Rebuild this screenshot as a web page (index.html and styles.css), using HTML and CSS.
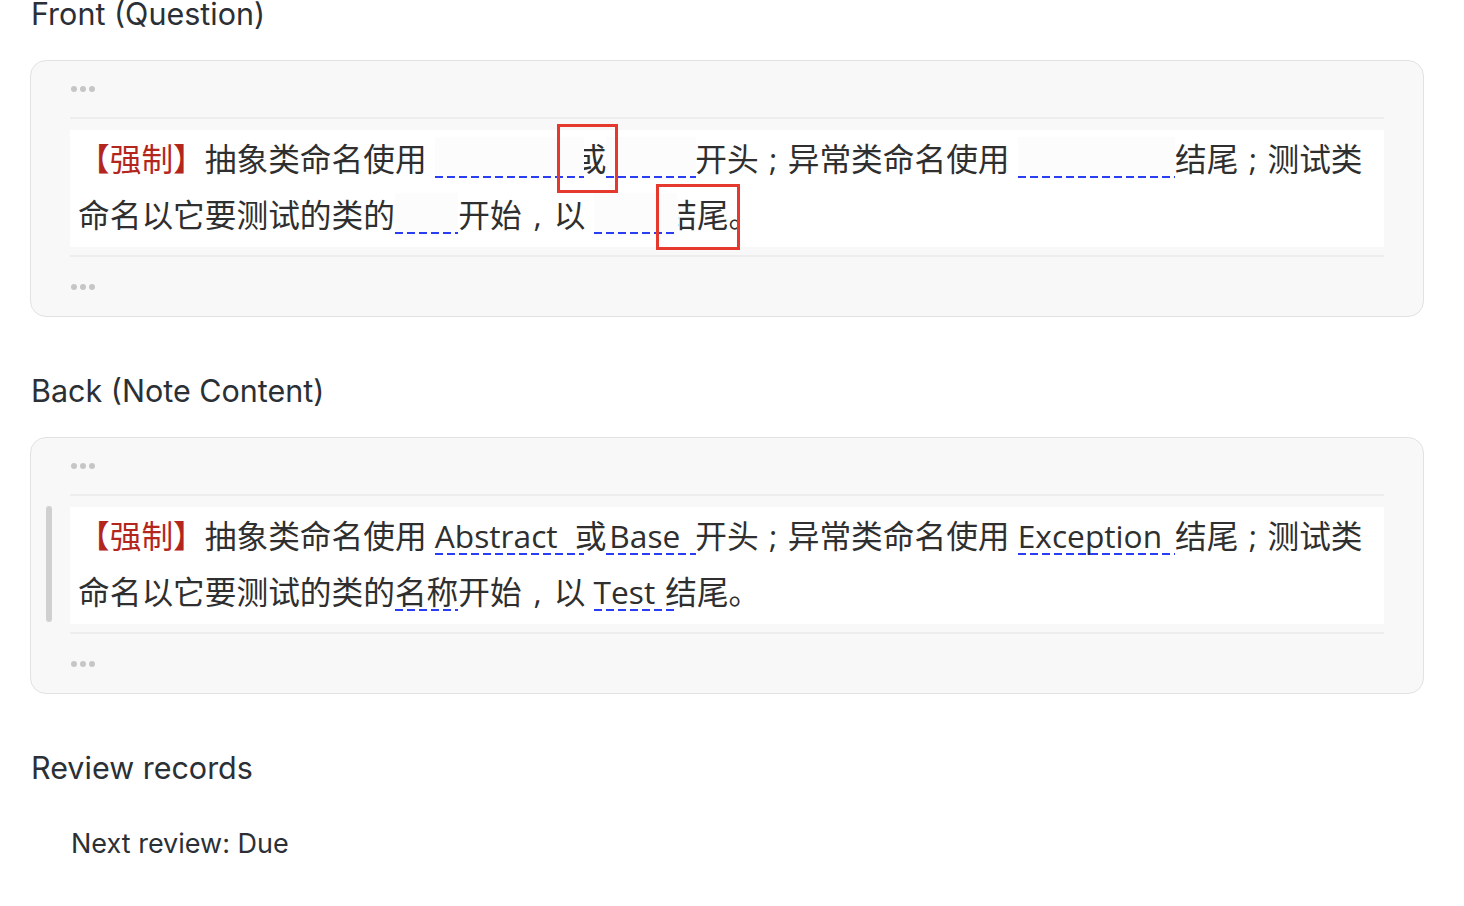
FILE: index.html
```html
<!DOCTYPE html>
<html>
<head>
	<meta charset="utf-8">
	<title>Card detail</title>
	<link rel="stylesheet" href="styles.css">
</head>
<body>
	<main class="page">
		<section class="field">
			<h2 class="field-title">Front (Question)</h2>
			<div class="card">
				<div class="dots"><span></span><span></span><span></span></div>
				<div class="rule"></div>
				<div class="note-row">
					<div class="note front">
						<span class="tag">【强制】</span>抽象类命名使用 <span class="u u-abstract blank">Abstract</span><span class="cut">或</span><span class="u u-base blank">Base</span>开头<span class="p">;</span>异常类命名使用 <span class="u u-exception blank">Exception</span>结尾<span class="p">;</span>测试类<br>命名以它要测试的类的<span class="u blank">名称</span>开始<span class="p p-wide">,</span>以 <span class="u u-test blank">Test</span><span class="cut cut-wide">结</span>尾。
						<span class="mark mark-a"></span>
						<span class="mark mark-b"></span>
					</div>
				</div>
				<div class="rule rule-bottom"></div>
				<div class="dots dots-bottom"><span></span><span></span><span></span></div>
			</div>
		</section>

		<section class="field">
			<h2 class="field-title">Back (Note Content)</h2>
			<div class="card">
				<div class="dots"><span></span><span></span><span></span></div>
				<div class="rule"></div>
				<div class="note-row quoted">
					<div class="bar"></div>
					<div class="note">
						<span class="tag">【强制】</span>抽象类命名使用 <span class="u u-abstract">Abstract</span>或<span class="u u-base">Base</span>开头<span class="p">;</span>异常类命名使用 <span class="u u-exception">Exception</span>结尾<span class="p">;</span>测试类<br>命名以它要测试的类的<span class="u">名称</span>开始<span class="p p-wide">,</span>以 <span class="u u-test">Test</span>结尾。
					</div>
				</div>
				<div class="rule rule-bottom"></div>
				<div class="dots dots-bottom"><span></span><span></span><span></span></div>
			</div>
		</section>

		<section class="field">
			<h2 class="field-title">Review records</h2>
			<p class="next-review">Next review: Due</p>
		</section>
	</main>
</body>
</html>
```

FILE: styles.css
```css
body {
	margin: 0;
	background: #ffffff;
	font-family: Inter, "Noto Sans", sans-serif;
	color: #2b3036;
}

.page {
	padding: 0 40px 0 30px;
	margin-top: -4px;
}

.field {
	margin-bottom: 56px;
}

.field-title {
	margin: 0 0 28px 0;
	font-size: 30.5px;
	line-height: 36px;
	font-weight: 400;
	padding-left: 1px;
}

/* card with the embedded note */
.card {
	border: 1px solid #e2e2e2;
	border-radius: 16px;
	background: #f8f8f8;
	padding: 0 39px;
}

.dots {
	height: 56px;
	display: flex;
	align-items: center;
	gap: 3px;
	padding-left: 1px;
}

.dots span {
	width: 6px;
	height: 6px;
	border-radius: 50%;
	background: #c6c6c6;
}

.dots-bottom {
	height: 59px;
}

.rule {
	height: 2px;
	background: #ededed;
}

.rule-bottom {
	margin-top: 8px;
}

.note-row {
	display: flex;
	margin-top: 11px;
}

.note-row.quoted {
	margin-left: -24px;
	gap: 18px;
}

.bar {
	width: 6px;
	border-radius: 3px;
	background: #d0d0d0;
	margin: -1px 0 2px 0;
}

.note {
	flex: 1;
	position: relative;
	background: #ffffff;
	padding: 1px 8px 4px 8px;
	font-family: "Open Sans", "Noto Sans CJK SC", sans-serif;
	font-size: 31.7px;
	line-height: 56px;
	color: #2f2f2f;
	white-space: nowrap;
}

.tag {
	color: #b3261e;
}

/* full-width punctuation drawn centred */
.p {
	display: inline-block;
	width: 29px;
	text-align: center;
}

.p-wide {
	width: 32px;
}

.u {
	background-image: linear-gradient(to right, #2a3df2 8px, transparent 8px);
	background-repeat: repeat-x;
	background-size: 12px 2px;
	background-position: 0 calc(100% - 2px);
}

.u-abstract {
	padding-right: 26px;
	margin-right: -9px;
}

.u-base {
	padding: 0 16px 0 3px;
	margin-right: -1px;
}

.u-exception {
	padding-right: 13px;
}

.u-test {
	padding-right: 22px;
	margin-right: -12px;
}

.blank {
	color: transparent;
	background-color: #fcfcfc;
}

.cut {
	position: relative;
}

.cut::before {
	content: "";
	position: absolute;
	left: 0;
	top: 6px;
	bottom: 6px;
	width: 9px;
	background: #fcfcfc;
}

.cut-wide::before {
	width: 13px;
}

/* red annotation boxes */
.mark {
	position: absolute;
	box-sizing: border-box;
	border: 3px solid #e4392c;
}

.mark-a {
	left: 487px;
	top: -6px;
	width: 61px;
	height: 69px;
}

.mark-b {
	left: 586px;
	top: 54px;
	width: 84px;
	height: 66px;
}

.next-review {
	margin: 42px 0 0 0;
	padding-left: 41px;
	font-size: 27px;
	line-height: 32px;
}
```
